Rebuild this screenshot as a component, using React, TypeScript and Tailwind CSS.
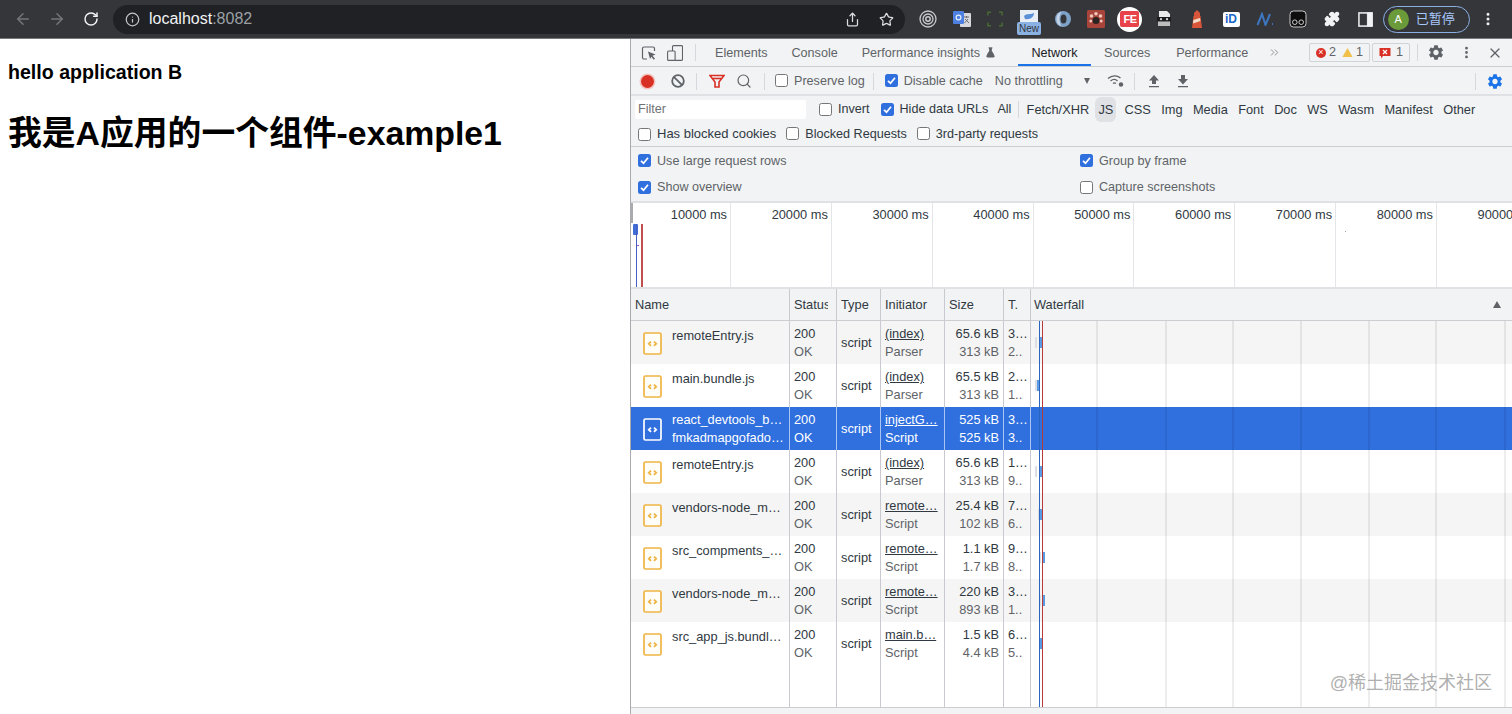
import { ArrowLeft, ArrowRight, RotateCw, Info, Share, Star, MoreVertical, X, Search, ChevronsRight, Puzzle, FlaskConical } from "lucide-react";

type Row = { name: string; sub?: string; init: string; initSub: string; s1: string; s2: string; t1: string; t2: string; bar: number; gray: number };

const rows: Row[] = [
  { name: "remoteEntry.js", init: "(index)", initSub: "Parser", s1: "65.6 kB", s2: "313 kB", t1: "3…", t2: "2..", bar: 8, gray: 4 },
  { name: "main.bundle.js", init: "(index)", initSub: "Parser", s1: "65.5 kB", s2: "313 kB", t1: "2…", t2: "1..", bar: 6, gray: 4 },
  { name: "react_devtools_b…", sub: "fmkadmapgofado…", init: "injectG…", initSub: "Script", s1: "525 kB", s2: "525 kB", t1: "3…", t2: "3..", bar: 6, gray: 7 },
  { name: "remoteEntry.js", init: "(index)", initSub: "Parser", s1: "65.6 kB", s2: "313 kB", t1: "1…", t2: "9..", bar: 9, gray: 4 },
  { name: "vendors-node_m…", init: "remote…", initSub: "Script", s1: "25.4 kB", s2: "102 kB", t1: "7…", t2: "6..", bar: 9, gray: 7 },
  { name: "src_compments_…", init: "remote…", initSub: "Script", s1: "1.1 kB", s2: "1.7 kB", t1: "9…", t2: "8..", bar: 11, gray: 8 },
  { name: "vendors-node_m…", init: "remote…", initSub: "Script", s1: "220 kB", s2: "893 kB", t1: "3…", t2: "1..", bar: 11, gray: 8 },
  { name: "src_app_js.bundl…", init: "main.b…", initSub: "Script", s1: "1.5 kB", s2: "4.4 kB", t1: "6…", t2: "5..", bar: 9, gray: 8 },
];

const gridCols = "grid grid-cols-[159px_47px_44px_64px_59px_27px_1fr]";
const cell = "border-r border-[#c8cacf]";

const gearPath =
  "M19.14 12.94c.04-.3.06-.61.06-.94 0-.32-.02-.64-.07-.94l2.03-1.58c.18-.14.23-.41.12-.61l-1.92-3.32c-.12-.22-.37-.29-.59-.22l-2.39.96c-.5-.38-1.03-.7-1.62-.94l-.36-2.54c-.04-.24-.24-.41-.48-.41h-3.84c-.24 0-.43.17-.47.41l-.36 2.54c-.59.24-1.13.57-1.62.94l-2.39-.96c-.22-.08-.47 0-.59.22L2.74 8.87c-.12.21-.08.47.12.61l2.03 1.58c-.05.3-.09.63-.09.94s.02.64.07.94l-2.03 1.58c-.18.14-.23.41-.12.61l1.92 3.32c.12.22.37.29.59.22l2.39-.96c.5.38 1.03.7 1.62.94l.36 2.54c.05.24.24.41.48.41h3.84c.24 0 .44-.17.47-.41l.36-2.54c.59-.24 1.13-.56 1.62-.94l2.39.96c.22.08.47 0 .59-.22l1.92-3.32c.12-.22.07-.47-.12-.61l-2.01-1.58zM12 15.6c-1.98 0-3.6-1.62-3.6-3.6s1.62-3.6 3.6-3.6 3.6 1.62 3.6 3.6-1.62 3.6-3.6 3.6z";

function Gear({ color }: { color: string }) {
  return (
    <svg viewBox="0 0 24 24" className="h-[19px] w-[19px]">
      <path d={gearPath} fill={color} />
    </svg>
  );
}

function Check({ on }: { on?: boolean }) {
  return on ? (
    <span className="flex h-[13px] w-[13px] shrink-0 items-center justify-center rounded-[2.5px] bg-[#2f6fde]">
      <svg viewBox="0 0 12 12" className="h-[11px] w-[11px]">
        <path d="M2.2 6.4 4.9 9 9.8 3" fill="none" stroke="#fff" strokeWidth="1.9" />
      </svg>
    </span>
  ) : (
    <span className="h-[13px] w-[13px] shrink-0 rounded-[2.5px] border border-[#767676] bg-white" />
  );
}

function Opt({ on, label, cls }: { on?: boolean; label: string; cls?: string }) {
  return (
    <span className={"flex items-center gap-[6px] whitespace-nowrap " + (cls ?? "text-[#5f6368]")}>
      <Check on={on} />
      {label}
    </span>
  );
}

function Sep({ cls }: { cls: string }) {
  return <span className={"h-[17px] w-px shrink-0 bg-[#d5d8dc] " + cls} />;
}

function FileIcon({ selected }: { selected: boolean }) {
  const c = selected ? "#ffffff" : "#efb443";
  return (
    <svg viewBox="0 0 19 23" className="h-[23px] w-[19px] shrink-0">
      <rect x="1" y="1" width="17" height="21" rx="1.5" fill={selected ? "none" : "#fffdf8"} stroke={c} strokeWidth="1.7" />
      <path d="M8 9.6 5.8 11.7 8 13.8M11 9.6l2.2 2.1L11 13.8" fill="none" stroke={c} strokeWidth="1.8" />
    </svg>
  );
}

function ExtIcons() {
  const slot = "flex h-full w-[33.7px] shrink-0 items-center justify-center";
  return (
    <div className="ml-[6px] flex h-full items-center">
      <span className={slot}>
        <svg viewBox="0 0 18 18" className="h-[18px] w-[18px]" fill="none" stroke="#c9cacc">
          <circle cx="9" cy="9" r="8" strokeWidth="1.3" />
          <circle cx="9" cy="9" r="5" strokeWidth="1.3" />
          <circle cx="9" cy="9" r="2.2" strokeWidth="1.5" />
        </svg>
      </span>
      <span className={slot}>
        <svg viewBox="0 0 18 18" className="h-[18px] w-[18px]">
          <rect x="7" y="3" width="11" height="14" rx="1" fill="#d6d8db" />
          <path d="m11 7 5 0M13.5 6v2M11.5 13l3.5-4M12 9l4 4" stroke="#6a6d72" strokeWidth="1" fill="none" />
          <rect x="0" y="1" width="11" height="13" rx="1" fill="#4d80e0" />
          <circle cx="5.5" cy="7.5" r="2.4" fill="none" stroke="#e6eefb" strokeWidth="1.2" />
        </svg>
      </span>
      <span className={slot}>
        <svg viewBox="0 0 18 18" className="h-[16px] w-[16px]" fill="none" stroke="#4a6a35" strokeWidth="1.6">
          <path d="M1 5V1.500h3.500M13.500 1.500H17V5M1 13v3.500h3.500M13.500 16.500H17V13" />
        </svg>
      </span>
      <span className="relative flex h-full w-[33.7px] shrink-0 items-start justify-center pt-[10px]">
        <svg viewBox="0 0 18 12" className="h-[12px] w-[18px]">
          <rect width="18" height="12" fill="#e9eef5" />
          <path d="M4 6c3-3 6-1 10-3 0 4-4 7-9 6z" fill="#5c8fd6" />
        </svg>
        <span className="absolute left-[5px] top-[22px] flex h-[13px] w-[24px] items-center justify-center rounded-[2px] bg-[#8ab0e4] text-[10px] leading-none text-[#33353a]">New</span>
      </span>
      <span className={slot}>
        <svg viewBox="0 0 18 18" className="h-[18px] w-[18px]">
          <circle cx="9" cy="9" r="8" fill="#7fa2c9" />
          <ellipse cx="9.5" cy="9" rx="3" ry="4.5" fill="#35363a" />
          <path d="M2.5 9c0-4 2-6.500 5-7-1.500 2-2 4.500-2 7s.6 5 2 7c-3-.5-5-3-5-7z" fill="#c4d4e6" />
        </svg>
      </span>
      <span className={slot}>
        <svg viewBox="0 0 18 18" className="h-[18px] w-[18px]">
          <rect width="18" height="18" rx="1.5" fill="#a9443a" />
          <circle cx="9" cy="10.5" r="3.5" fill="#2c2422" />
          <circle cx="4.5" cy="6" r="1.8" fill="#eec9bd" />
          <circle cx="9" cy="3.8" r="1.8" fill="#eec9bd" />
          <circle cx="13.5" cy="6" r="1.8" fill="#eec9bd" />
          <circle cx="3.8" cy="11" r="1.5" fill="#eec9bd" />
          <circle cx="14.2" cy="11" r="1.5" fill="#eec9bd" />
        </svg>
      </span>
      <span className={slot}>
        <span className="flex h-[25px] w-[25px] items-center justify-center rounded-full bg-white">
          <span className="flex h-[16px] w-[19px] items-center justify-center rounded-[2px] bg-[#e8424a] text-[11px] font-bold leading-none tracking-[-0.5px] text-white">FE</span>
        </span>
      </span>
      <span className={slot}>
        <svg viewBox="0 0 18 18" className="h-[18px] w-[18px]">
          <path d="M4 1h8l3 3v3H4z" fill="#e9e9e9" />
          <rect x="2" y="7" width="14" height="4.5" fill="#1c1c1e" />
          <path d="M3 11.500h12V16H3z" fill="#bdbdbd" />
          <circle cx="6" cy="9.2" r="1.1" fill="#ddd" />
          <circle cx="12" cy="9.2" r="1.1" fill="#ddd" />
        </svg>
      </span>
      <span className={slot}>
        <svg viewBox="0 0 18 20" className="h-[20px] w-[18px]">
          <path d="M9 1 12 4v3H6V4z" fill="#d9553a" />
          <path d="M5.500 7h7L14 19H4z" fill="#d9553a" />
          <path d="M5.300 11 12 9l.4 3-7.400 2.500z" fill="#f3dcc8" />
        </svg>
      </span>
      <span className={slot}>
        <span className="flex h-[15px] w-[17px] items-center justify-center rounded-[2px] bg-white text-[12px] font-bold leading-none text-[#1967c9]">iD</span>
      </span>
      <span className={slot}>
        <svg viewBox="0 0 18 14" className="h-[14px] w-[18px]" fill="none">
          <path d="M1.500 13 6 2l3.500 11L14 2" stroke="#3d77c0" strokeWidth="2" />
          <path d="M16.500 11v2" stroke="#3d77c0" strokeWidth="1" />
        </svg>
      </span>
      <span className={slot}>
        <svg viewBox="0 0 18 18" className="h-[18px] w-[18px]" fill="none">
          <rect x="1" y="1" width="16" height="16" rx="3.5" fill="#0d0d0e" stroke="#c8c8c8" strokeWidth="1" />
          <circle cx="5.8" cy="12.2" r="2.3" stroke="#cfcfcf" strokeWidth="1" />
          <circle cx="12.2" cy="12.2" r="2.3" stroke="#cfcfcf" strokeWidth="1" />
        </svg>
      </span>
      <span className={slot}>
        <Puzzle size={16} fill="#f1f3f4" stroke="#f1f3f4" />
      </span>
      <span className={slot}>
        <svg viewBox="0 0 16 16" className="h-[15px] w-[15px]" fill="none" stroke="#f1f3f4">
          <rect x="1" y="1" width="14" height="14" strokeWidth="1.6" />
          <rect x="10" y="1" width="5" height="14" fill="#f1f3f4" />
        </svg>
      </span>
      <span className="flex h-[27px] w-[87px] shrink-0 items-center gap-[7px] rounded-full border border-[#8ab0e4] pl-[4px]">
        <span className="flex h-[21px] w-[21px] items-center justify-center rounded-full bg-[#6b9a3a] text-[11px] text-white">A</span>
        <span className="text-[13px] text-[#a8c7fa]">已暂停</span>
      </span>
      <span className="flex w-[36px] shrink-0 justify-center">
        <MoreVertical size={16} stroke="#f1f3f4" strokeWidth={2.5} />
      </span>
    </div>
  );
}

function TopBar() {
  return (
    <div className="flex h-[39px] shrink-0 items-center border-b border-[#77787b] bg-[#35363a] pl-[6px]">
      <span className="flex w-[34px] justify-center"><ArrowLeft size={18} stroke="#74767a" /></span>
      <span className="flex w-[34px] justify-center"><ArrowRight size={18} stroke="#74767a" /></span>
      <span className="flex w-[33px] justify-center"><RotateCw size={16} stroke="#f1f3f4" strokeWidth={2.2} /></span>
      <div className="ml-[6px] flex h-[29px] w-[792px] shrink-0 items-center rounded-full bg-[#202124] pl-[12px]">
        <Info size={15} stroke="#c4c6c9" />
        <span className="ml-[9px] text-[16px] text-[#f1f3f4]">localhost<span className="text-[#9aa0a6]">:8082</span></span>
        <span className="ml-auto flex w-[34px] justify-center"><Share size={15} stroke="#dcdde0" /></span>
        <span className="mr-[2px] flex w-[34px] justify-center"><Star size={15} stroke="#dcdde0" /></span>
      </div>
      <ExtIcons />
    </div>
  );
}

function TabBar() {
  const tab = "px-3 pt-[1px] whitespace-nowrap";
  return (
    <div className="flex h-[28px] shrink-0 items-center border-b border-[#cbcdd1] bg-[#f1f3f4] text-[#5f6368]">
      <span className="flex w-[35px] shrink-0 justify-center pl-[1px]">
        <svg viewBox="0 0 16 16" className="h-[16px] w-[16px]" fill="none" stroke="#5f6368" strokeWidth="1.2">
          <path d="M6 14H3a1.5 1.5 0 0 1-1.5-1.5v-9A1.5 1.5 0 0 1 3 2h9a1.5 1.5 0 0 1 1.5 1.5V6" />
          <path d="m7 6.500 7.500 3-3 1.200 2.500 3-1.300 1-2.300-3L9 14z" fill="#5f6368" stroke="none" />
        </svg>
      </span>
      <span className="flex w-[18px] shrink-0 justify-center">
        <svg viewBox="0 0 16 16" className="h-[16px] w-[16px]" fill="none" stroke="#5f6368" strokeWidth="1.1">
          <rect x="5.5" y="0.6" width="10" height="14.8" rx="1.2" />
          <rect x="0.6" y="6" width="7.5" height="9.4" rx="1" fill="#f1f3f4" />
        </svg>
      </span>
      <Sep cls="ml-[11px] mr-[7px]" />
      <span className={tab}>Elements</span>
      <span className={tab}>Console</span>
      <span className="flex items-center gap-[5px] pl-3 pr-[11px] pt-[1px] whitespace-nowrap">Performance insights<FlaskConical size={11} fill="#5f6368" /></span>
      <span className="ml-[11px] flex h-[27px] w-[73px] items-center justify-center whitespace-nowrap pt-[1px] text-[#202124] shadow-[inset_0_-2px_0_#1a73e8]">Network</span>
      <span className="mr-[2px] whitespace-nowrap px-3 pt-[1px] pl-[13px]">Sources</span>
      <span className={tab}>Performance</span>
      <span className="ml-[7px] flex w-[14px] justify-center"><ChevronsRight size={13} strokeWidth={1.2} /></span>
      <span className="ml-auto flex h-[19px] w-[61px] items-center justify-center gap-[3px] rounded-[2px] border border-[#d0d3d7]">
        <span className="flex h-[10px] w-[10px] items-center justify-center rounded-full bg-[#d93025] text-[9px] leading-none text-white">×</span>2
        <svg viewBox="0 0 12 11" className="ml-[3px] h-[11px] w-[11px]"><path d="M6 .5 11.5 10.5H.5z" fill="#f0c04a" /></svg>1
      </span>
      <span className="ml-[2px] flex h-[19px] w-[38px] items-center justify-center gap-[5px] rounded-[2px] border border-[#d0d3d7]">
        <svg viewBox="0 0 12 12" className="h-[12px] w-[12px]"><path d="M.5 1h11v8H4l-2 2.5V9H.5z" fill="#d93025" /><path d="m4 3 4 4M8 3 4 7" stroke="#fff" strokeWidth="1.2" /></svg>1
      </span>
      <Sep cls="ml-[7px]" />
      <span className="ml-[9px] flex w-[18px] justify-center"><Gear color="#5f6368" /></span>
      <span className="ml-[12px] flex w-[18px] justify-center"><MoreVertical size={15} strokeWidth={2.5} /></span>
      <span className="ml-[11px] mr-[8px] flex w-[18px] justify-center"><X size={16} strokeWidth={1.8} /></span>
    </div>
  );
}

function ActionBar() {
  return (
    <div className="flex h-[29px] shrink-0 items-center border-b-2 border-[#dfe1e5] bg-[#f1f3f4] pt-[1px] text-[#5f6368]">
      <span className="ml-[10px] h-[13px] w-[13px] rounded-full bg-[#d93025] shadow-[0_0_0_1.5px_#f3c6c2]" />
      <span className="ml-[17px] flex h-[14px] w-[14px] items-center justify-center">
        <svg viewBox="0 0 14 14" className="h-[14px] w-[14px]" fill="none" stroke="#5f6368" strokeWidth="1.8"><circle cx="7" cy="7" r="5.8" /><path d="m2.8 2.8 8.400 8.400" /></svg>
      </span>
      <Sep cls="ml-[11px]" />
      <span className="ml-[12px] flex w-[16px] justify-center">
        <svg viewBox="0 0 16 14" className="h-[14px] w-[16px]" fill="none" stroke="#d93025" strokeWidth="1.6"><path d="M1 1.5h14L10 8v5H6V8z" /><path d="M4 4.5h8" /></svg>
      </span>
      <span className="ml-[11px] flex w-[16px] justify-center"><Search size={16} strokeWidth={1.8} /></span>
      <Sep cls="ml-[12px]" />
      <span className="ml-[10px] flex"><Opt label="Preserve log" /></span>
      <Sep cls="ml-[8px]" />
      <span className="ml-[11px] flex"><Opt on label="Disable cache" /></span>
      <span className="ml-[12px] whitespace-nowrap">No throttling</span>
      <span className="ml-[21px] h-0 w-0 border-x-[3.5px] border-t-[6px] border-x-transparent border-t-[#5f6368]" />
      <svg viewBox="0 0 18 14" className="ml-[17px] h-[14px] w-[18px]" fill="none" stroke="#5f6368" strokeWidth="1.3">
        <path d="M1 4.5C5 1 10 1 13.5 4M3.500 7c2.500-2 5-2 7 0M6 9.500c1-.8 2-.8 3 0" />
        <circle cx="14" cy="10.5" r="2.2" fill="#5f6368" stroke="none" />
      </svg>
      <Sep cls="ml-[9px]" />
      <svg viewBox="0 0 12 14" className="ml-[13px] h-[14px] w-[12px]" fill="#5f6368"><path d="M6 1 11 6.500H8V10H4V6.500H1zM1 12h10v1.300H1z" /></svg>
      <svg viewBox="0 0 12 14" className="ml-[17px] h-[14px] w-[12px]" fill="#5f6368"><path d="M6 10.500 11 5H8V1H4v4H1zM1 12h10v1.300H1z" /></svg>
      <Sep cls="ml-auto" />
      <span className="ml-[10px] mr-[8px] flex w-[18px] justify-center"><Gear color="#1a73e8" /></span>
    </div>
  );
}

function FilterBar() {
  const types = ["Fetch/XHR", "JS", "CSS", "Img", "Media", "Font", "Doc", "WS", "Wasm", "Manifest", "Other"];
  const dark = "text-[#303942]";
  return (
    <div className="flex h-[51px] shrink-0 flex-col border-b border-[#cbcdd1] bg-[#f1f3f4] text-[#303942]">
      <div className="flex h-[26px] items-center pt-[1px]">
        <span className="ml-[4px] flex h-[19px] w-[171px] items-center rounded-[2px] bg-white pl-[3px] text-[#6f7275]">Filter</span>
        <span className="ml-[13px]"><Opt label="Invert" cls={dark} /></span>
        <span className="ml-[11px]"><Opt on label="Hide data URLs" cls={dark} /></span>
        <span className="ml-[9px]">All</span>
        <Sep cls="ml-[7px] mr-[2px]" />
        {types.map((t) => (
          <span key={t} className={"whitespace-nowrap rounded-[6px] py-[3px] text-[12.8px] " + (t === "JS" ? "ml-[1px] mr-[3px] bg-[#dfe1e5] px-[3px]" : "px-[5.2px]")}>{t}</span>
        ))}
      </div>
      <div className="flex h-[24px] items-center gap-[10px] pl-[7px]">
        <Opt label="Has blocked cookies" cls="text-[13px] text-[#303942]" />
        <Opt label="Blocked Requests" cls={dark} />
        <Opt label="3rd-party requests" cls={dark} />
      </div>
    </div>
  );
}

function SettingsPane() {
  return (
    <div className="grid h-[56px] shrink-0 grid-cols-[442px_1fr] grid-rows-[26px_27px] items-center border-b-2 border-[#dfe1e5] bg-[#f1f3f4] pl-[7px] pt-[1px]">
      <Opt on label="Use large request rows" />
      <Opt on label="Group by frame" />
      <Opt on label="Show overview" />
      <Opt label="Capture screenshots" />
    </div>
  );
}

function Overview() {
  const ticks = ["10000 ms", "20000 ms", "30000 ms", "40000 ms", "50000 ms", "60000 ms", "70000 ms", "80000 ms", "90000 ms"];
  return (
    <div className="relative flex h-[86px] shrink-0 overflow-hidden border-b-2 border-[#dfe1e5] bg-white">
      {ticks.map((t) => (
        <div key={t} className="h-full w-[100.85px] shrink-0 border-r border-[#e3e5e8] pr-[3px] pt-[2px] text-right text-[12.8px] text-[#303942] first:w-[100px]">{t}</div>
      ))}
      <span className="absolute left-0 top-0 h-[20px] w-[2px] bg-[#a9abae]" />
      <span className="absolute left-[2px] top-[21px] h-[11px] w-[5px] rounded-[1px] bg-[#3f6fd6]" />
      <span className="absolute left-[5px] top-[21px] h-[65px] w-px bg-[#4a5fc4]" />
      <span className="absolute left-[10px] top-[21px] h-[65px] w-[1.5px] bg-[#c0504d]" />
      <span className="absolute left-[6px] top-[42px] h-px w-[2px] bg-[#a04fd0]" />
      <span className="absolute left-[714px] top-[28px] h-px w-px bg-[#9aa0a6]" />
    </div>
  );
}

function Table() {
  const two = "flex flex-col justify-center pt-[1px] leading-[18px] ";
  return (
    <div className="relative flex min-h-0 flex-1 flex-col bg-white text-[12.8px]">
      <div className={gridCols + " h-[32px] shrink-0 items-stretch border-b border-[#cbcdd1] bg-[#f1f3f4] text-[#303942]"}>
        <span className={cell + " flex items-center pl-[4px]"}>Name</span>
        <span className={cell + " flex items-center overflow-hidden whitespace-nowrap pl-[4px]"}><span className="w-[34px] overflow-hidden">Status</span></span>
        <span className={cell + " flex items-center pl-[4px]"}>Type</span>
        <span className={cell + " flex items-center pl-[4px]"}>Initiator</span>
        <span className={cell + " flex items-center pl-[4px]"}>Size</span>
        <span className={cell + " flex items-center pl-[4px]"}>T.</span>
        <span className="flex items-center justify-between pl-[3px] pr-[11px]">Waterfall<span className="h-0 w-0 border-x-[4px] border-b-[7px] border-x-transparent border-b-[#5f6368]" /></span>
      </div>
      {rows.map((r, i) => {
        const sel = i === 2;
        const bg = sel ? "bg-[#2f6fde] text-white" : i % 2 === 0 ? "bg-[#f5f5f5] text-[#303942]" : "bg-white text-[#303942]";
        const soft = sel ? "text-white" : "text-[#5f6368]";
        const div = sel ? "border-r border-[#a9c4f1]" : cell;
        return (
          <div key={i} className={gridCols + " h-[43px] shrink-0 " + bg}>
            <div className={div + " flex items-center pl-[12px] pt-[1px]"}>
              <FileIcon selected={sel} />
              <div className="ml-[10px] flex min-w-0 flex-col whitespace-nowrap leading-[18px]">
                <span className={r.sub ? "" : "-mt-[15px]"}>{r.name}</span>
                {r.sub && <span>{r.sub}</span>}
              </div>
            </div>
            <div className={two + div + " pl-[4px]"}>
              <span>200</span>
              <span className={soft}>OK</span>
            </div>
            <div className={div + " flex items-center pl-[4px] pt-[1px]"}>script</div>
            <div className={two + div + " whitespace-nowrap pl-[4px]"}>
              <span className="self-start underline">{r.init}</span>
              <span className={soft}>{r.initSub}</span>
            </div>
            <div className={two + div + " pr-[4px] text-right"}>
              <span>{r.s1}</span>
              <span className={soft}>{r.s2}</span>
            </div>
            <div className={two + div + " pl-[4px]"}>
              <span>{r.t1}</span>
              <span className={soft}>{r.t2}</span>
            </div>
            <div className="flex items-center">
              <span className={"h-[11px] w-[2px] " + (sel ? "bg-[#6f98e6]" : "bg-[#dcdfe3]")} style={{ marginLeft: r.gray }} />
              <span className={"h-[11px] w-[3px] " + (sel ? "bg-[#2f6fde]" : "bg-[#5a9be3]")} style={{ marginLeft: r.bar - r.gray - 2 }} />
            </div>
          </div>
        );
      })}
      <div className={gridCols + " min-h-0 flex-1"}>
        <div className={cell} />
        <div className={cell} />
        <div className={cell} />
        <div className={cell} />
        <div className={cell} />
        <div className={cell} />
        <div />
      </div>
      <div className="pointer-events-none absolute bottom-0 left-[400px] top-[32px] flex">
        <span className="h-full w-[67px] shrink-0 border-r-2 border-black/[0.07]" />
        <span className="h-full w-[69px] shrink-0 border-r-2 border-black/[0.07]" />
        <span className="h-full w-[67px] shrink-0 border-r-2 border-black/[0.07]" />
        <span className="h-full w-[68px] shrink-0 border-r-2 border-black/[0.07]" />
        <span className="h-full w-[68px] shrink-0 border-r-2 border-black/[0.07]" />
        <span className="h-full w-[67px] shrink-0 border-r-2 border-black/[0.07]" />
        <span className="h-full w-[69px] shrink-0 border-r-2 border-black/[0.07]" />
      </div>
      <span className="absolute bottom-0 left-[408px] top-[32px] w-px bg-[#2a66c0]" />
      <span className="absolute bottom-0 left-[411px] top-[32px] w-px bg-[#b83a3a]" />
      <span className="pointer-events-none absolute bottom-[15px] right-[20px] whitespace-nowrap text-[18px] leading-none text-[#9a9a9a]/80">@稀土掘金技术社区</span>
    </div>
  );
}

export default function App() {
  return (
    <div className="flex h-[714px] w-[1512px] flex-col overflow-hidden bg-white font-['Liberation_Sans','Noto_Sans_CJK_SC',sans-serif] text-[12.6px]">
      <TopBar />
      <div className="flex min-h-0 flex-1">
        <div className="w-[630px] shrink-0 bg-white pl-[8px] text-black">
          <p className="pt-[22px] text-[19.6px] font-bold leading-[23px]">hello application B</p>
          <h1 className="mt-[29px] text-[33.8px] font-bold leading-[40px]">我是A应用的一个组件-example1</h1>
        </div>
        <div className="flex min-w-0 flex-1 flex-col border-l border-[#a8aaad]">
          <TabBar />
          <ActionBar />
          <FilterBar />
          <SettingsPane />
          <Overview />
          <Table />
          <div className="h-[7px] shrink-0 border-t border-[#cbcdd1] bg-[#f1f3f4]" />
        </div>
      </div>
    </div>
  );
}
